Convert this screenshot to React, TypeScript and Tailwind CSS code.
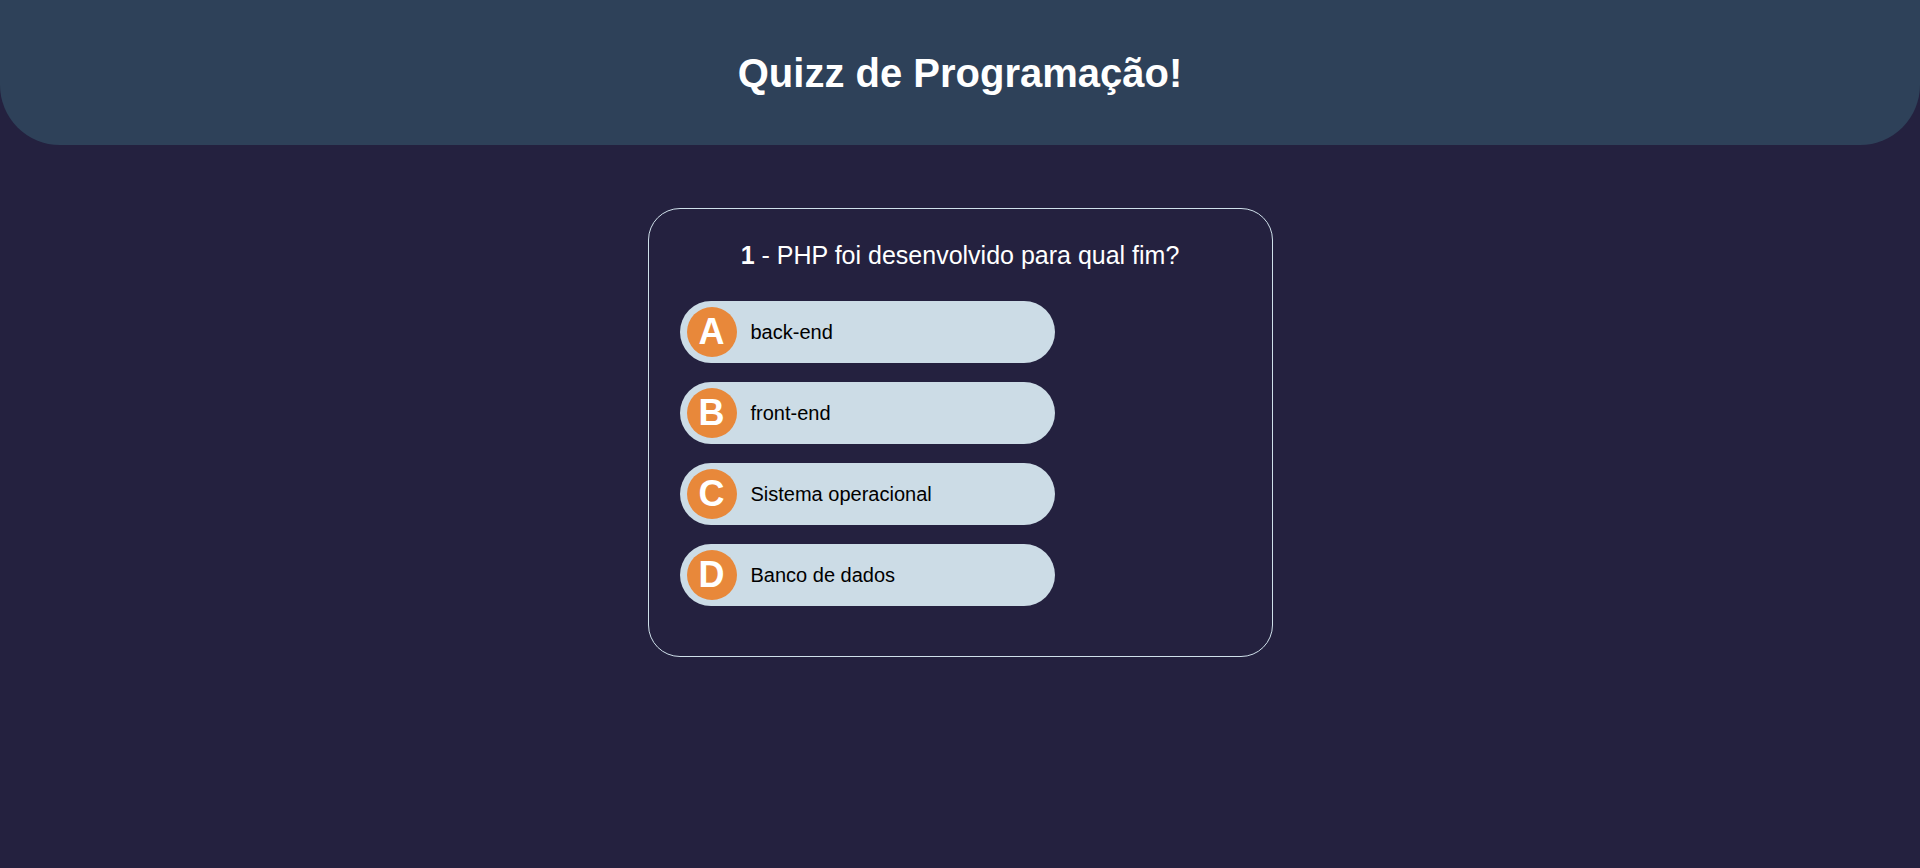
import React from 'react';

const options = [
  { letter: 'A', text: 'back-end' },
  { letter: 'B', text: 'front-end' },
  { letter: 'C', text: 'Sistema operacional' },
  { letter: 'D', text: 'Banco de dados' },
];

export default function App() {
  return (
    <div className="min-h-[868px] bg-[#24213f] font-['Liberation_Sans',Arial,sans-serif]">
      <header className="h-[145px] flex items-center justify-center bg-[#2e4159] rounded-b-[60px]">
        <h1 className="text-[40px] font-bold text-white">Quizz de Programação!</h1>
      </header>

      <main className="flex justify-center pt-[63px]">
        <div className="w-[625px] border border-[#cfe0ea] rounded-[32px] pt-[30px] pb-[50px] px-[31px]">
          <p className="text-center text-[25px] text-white leading-[32px] mb-[30px]">
            <span className="font-bold">1</span> - PHP foi desenvolvido para qual fim?
          </p>

          <ul className="flex flex-col gap-[19px]">
            {options.map(opt => (
              <li key={opt.letter}>
                <button className="w-[375px] h-[62px] flex items-center gap-[14px] pl-[7px] bg-[#ccdce6] rounded-[31px] cursor-pointer">
                  <span className="w-[50px] h-[50px] rounded-full bg-[#e8883a] flex items-center justify-center text-white text-[36px] font-bold">
                    {opt.letter}
                  </span>
                  <span className="text-[20px] text-black">{opt.text}</span>
                </button>
              </li>
            ))}
          </ul>
        </div>
      </main>
    </div>
  );
}
